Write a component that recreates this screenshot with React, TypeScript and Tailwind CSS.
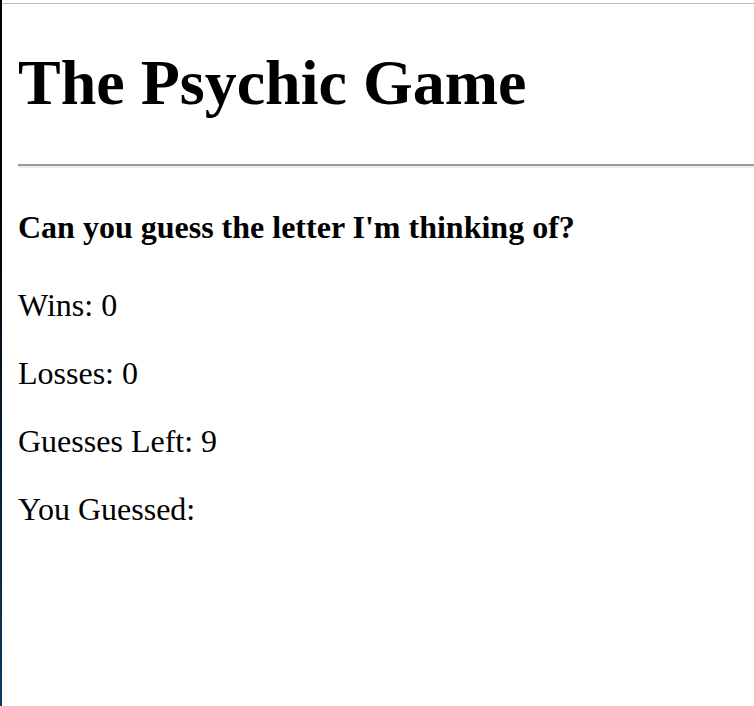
export default function App() {
  const stats = [
    { label: 'Wins', value: '0' },
    { label: 'Losses', value: '0' },
    { label: 'Guesses Left', value: '9' },
    { label: 'You Guessed', value: '' },
  ];

  return (
    <div className="flex min-h-[706px] w-full overflow-hidden bg-white">
      {/* dark window edge on the left */}
      <div className="w-[2px] shrink-0 bg-gradient-to-b from-black via-[#06121f] to-[#0a3a60]" />
      <div className="flex-1 min-w-0">
        <div className="mt-[3px] border-t border-[#b9b9b9]" />
        <div className="pl-4 pt-[42px] font-['Liberation_Serif','Times_New_Roman',serif] text-black">
          <h1 className="text-[64px] leading-[74px] font-bold">The Psychic Game</h1>
          <hr className="mt-[44px] border-t-2 border-b-2 border-t-[#9b9b9b] border-b-[#ededed]" />
          <h4 className="mt-[41px] text-[32px] leading-[37px] font-bold">
            Can you guess the letter I'm thinking of?
          </h4>
          <div className="mt-[41px] flex flex-col gap-[32px]">
            {stats.map((s) => (
              <p key={s.label} className="text-[32px] leading-[36px]">
                {s.label}: {s.value}
              </p>
            ))}
          </div>
        </div>
      </div>
    </div>
  );
}
